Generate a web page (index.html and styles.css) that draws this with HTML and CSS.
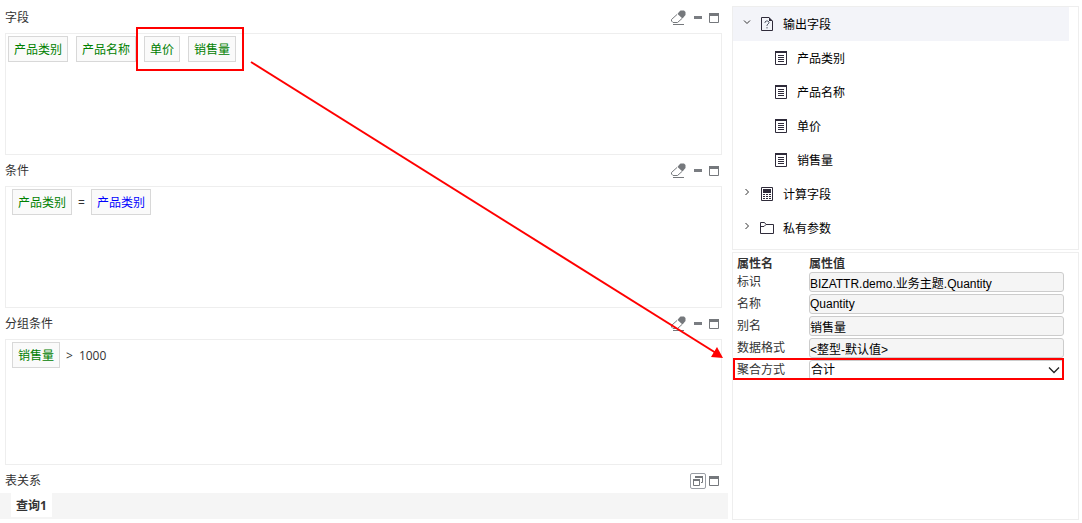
FILE: index.html
```html
<!DOCTYPE html>
<html lang="zh-CN">
<head>
  <meta charset="UTF-8">
  <title>查询设计</title>
  <link rel="stylesheet" href="styles.css">
</head>
<body>

  <!-- 公用图标 -->
  <svg class="sprite" aria-hidden="true">
    <symbol id="i-eraser" viewBox="0 0 16 16">
      <path d="M8 2l1.500-1.500h3.500l1.500 1.500v3l-3 3.500-5-4.500z" fill="#75787c"/>
      <path d="M6 4.500L.5 9.500v1.500l1.500 1.500h4.500l4.500-4M2 14.500h11" fill="none" stroke="#75787c"/>
    </symbol>
    <symbol id="i-min" viewBox="0 0 10 10">
      <path d="M1 3h8v3H1z" fill="#7a7d82"/>
    </symbol>
    <symbol id="i-max" viewBox="0 0 10 10">
      <path d="M.5 .5h9v9h-9z" fill="none" stroke="#75787c"/>
      <path d="M0 0h10v3H0z" fill="#75787c"/>
    </symbol>
    <symbol id="i-restore" viewBox="0 0 10 10">
      <path d="M2 0h8v2H2zM0 3h7v2H0z" fill="#75787c"/>
      <path d="M9.500 1v5.500H8M.5 4v5.500h6V4" fill="none" stroke="#75787c"/>
    </symbol>
    <symbol id="i-field" viewBox="0 0 14 14">
      <path d="M1.500 .5h11v13h-11z" fill="none" stroke="#2f2b3a"/>
      <path d="M1 0h12v2H1z" fill="#2f2b3a"/>
      <path d="M4 4.500h6M4 6.500h6M4 8.500h6M4 10.500h6" stroke="#2f2b3a"/>
    </symbol>
    <symbol id="i-output" viewBox="0 0 14 14">
      <path d="M9 .5H1.500v13h11V4" fill="none" stroke="#2f2b3a"/>
      <path d="M9 0l4 4H9z" fill="#2f2b3a"/>
      <path d="M5 6V5l1-1h2l1 1v1L7 8v1M7 10v1.500" fill="none" stroke="#5d6270"/>
    </symbol>
    <symbol id="i-calc" viewBox="0 0 14 14">
      <path d="M1.500 .5h11v13h-11z" fill="none" stroke="#2f2b3a"/>
      <path d="M3 2h8v4H3zM3 7h2v1H3zM6 7h2v1H6zM9 7h2v1H9zM3 9h2v1H3zM6 9h2v1H6zM9 9h2v1H9zM3 11h2v1H3zM6 11h2v1H6zM9 11h2v1H9z" fill="#2f2b3a"/>
    </symbol>
    <symbol id="i-folder" viewBox="0 0 14 14">
      <path d="M.5 12.500v-11h4l1.500 2h7.500v9zM.5 5.500H4l2-2" fill="none" stroke="#2f2b3a"/>
    </symbol>
    <symbol id="i-open" viewBox="0 0 8 8">
      <path d="M1 2.500l3 3 3-3" fill="none" stroke="#333"/>
    </symbol>
    <symbol id="i-closed" viewBox="0 0 8 8">
      <path d="M2.500 1l3 3-3 3" fill="none" stroke="#333"/>
    </symbol>
  </svg>

  <div class="workspace">
    <div class="main">
      <div class="section">
        <div class="section-header">
          <span class="section-title">字段</span>
          <button class="tool" title="清空"><svg class="eraser"><use href="#i-eraser"/></svg></button>
          <button class="tool" title="最小化"><svg><use href="#i-min"/></svg></button>
          <button class="tool" title="最大化"><svg><use href="#i-max"/></svg></button>
        </div>
        <div class="drop-box">
          <span class="chip">产品类别</span>
          <span class="chip">产品名称</span>
          <span class="marked-group">
            <span class="chip">单价</span>
            <span class="chip">销售量</span>
          </span>
        </div>
      </div>

      <div class="section">
        <div class="section-header">
          <span class="section-title">条件</span>
          <button class="tool" title="清空"><svg class="eraser"><use href="#i-eraser"/></svg></button>
          <button class="tool" title="最小化"><svg><use href="#i-min"/></svg></button>
          <button class="tool" title="最大化"><svg><use href="#i-max"/></svg></button>
        </div>
        <div class="drop-box drop-expr">
          <span class="chip">产品类别</span>
          <span class="expr-text">=</span>
          <span class="chip chip-value">产品类别</span>
        </div>
      </div>

      <div class="section">
        <div class="section-header">
          <span class="section-title">分组条件</span>
          <button class="tool" title="清空"><svg class="eraser"><use href="#i-eraser"/></svg></button>
          <button class="tool" title="最小化"><svg><use href="#i-min"/></svg></button>
          <button class="tool" title="最大化"><svg><use href="#i-max"/></svg></button>
        </div>
        <div class="drop-box drop-expr drop-last">
          <span class="chip">销售量</span>
          <span class="expr-text">&gt;</span>
          <span class="expr-text">1000</span>
        </div>
      </div>

      <div class="section">
        <div class="section-header section-header-last">
          <span class="section-title">表关系</span>
          <button class="tool tool-framed" title="还原"><svg><use href="#i-restore"/></svg></button>
          <button class="tool" title="最大化"><svg><use href="#i-max"/></svg></button>
        </div>
        <div class="tab-bar">
          <button class="tab">查询1</button>
        </div>
      </div>

      <!-- 指向聚合方式的箭头 -->
      <svg class="arrow" viewBox="0 0 474 300">
        <path d="M1 1L466 292" stroke="#f00" stroke-width="2"/>
        <path d="M473 297L461 296L467 286z" fill="#f00"/>
      </svg>
    </div>

    <div class="side">
      <ul class="tree">
        <li class="node selected">
          <svg class="toggle"><use href="#i-open"/></svg>
          <svg class="node-icon"><use href="#i-output"/></svg>
          <span>输出字段</span>
        </li>
        <li class="node leaf"><svg class="node-icon"><use href="#i-field"/></svg><span>产品类别</span></li>
        <li class="node leaf"><svg class="node-icon"><use href="#i-field"/></svg><span>产品名称</span></li>
        <li class="node leaf"><svg class="node-icon"><use href="#i-field"/></svg><span>单价</span></li>
        <li class="node leaf"><svg class="node-icon"><use href="#i-field"/></svg><span>销售量</span></li>
        <li class="node">
          <svg class="toggle"><use href="#i-closed"/></svg>
          <svg class="node-icon"><use href="#i-calc"/></svg>
          <span>计算字段</span>
        </li>
        <li class="node">
          <svg class="toggle"><use href="#i-closed"/></svg>
          <svg class="node-icon"><use href="#i-folder"/></svg>
          <span>私有参数</span>
        </li>
      </ul>

      <div class="props">
        <table class="prop-table">
          <thead>
            <tr><th class="prop-name">属性名</th><th>属性值</th></tr>
          </thead>
          <tbody>
            <tr>
              <td><label for="p-id">标识</label></td>
              <td><input id="p-id" type="text" value="BIZATTR.demo.业务主题.Quantity" readonly></td>
            </tr>
            <tr>
              <td><label for="p-name">名称</label></td>
              <td><input id="p-name" type="text" value="Quantity" readonly></td>
            </tr>
            <tr>
              <td><label for="p-alias">别名</label></td>
              <td><input id="p-alias" type="text" value="销售量" readonly></td>
            </tr>
            <tr>
              <td><label for="p-format">数据格式</label></td>
              <td><input id="p-format" type="text" value="&lt;整型-默认值&gt;" readonly></td>
            </tr>
            <tr>
              <td><label for="p-agg">聚合方式</label></td>
              <td class="select-cell">
                <select id="p-agg"><option>合计</option></select>
                <svg class="caret" viewBox="0 0 12 12"><path d="M1 3.500l5 5 5-5" fill="none" stroke="#222" stroke-width="1.300"/></svg>
              </td>
            </tr>
          </tbody>
        </table>
      </div>
    </div>
  </div>

</body>
</html>
```
FILE: styles.css
```css
* {
  box-sizing: border-box;
}

body {
  margin: 0;
  background-color: #fff;
  color: #333;
  font-family: "Open Sans", "Noto Sans CJK SC", sans-serif;
  font-size: 12px;
  line-height: 18px;
}

button {
  border: 0;
  padding: 0;
  background: none;
  font: inherit;
  color: inherit;
  cursor: pointer;
}

svg {
  display: block;
  flex-shrink: 0;
}

.sprite {
  position: absolute;
  width: 0;
  height: 0;
}

.workspace {
  display: flex;
  gap: 4px;
  padding-right: 3px;
}

/* 左侧设计区 */
.main {
  position: relative;
  flex: 1;
  min-width: 0;
  padding-top: 2px;
}

.section-header {
  display: flex;
  align-items: center;
  height: 31px;
  padding: 0 9px 0 5px;
}

.section-header-last {
  height: 28px;
  padding-top: 3px;
}

.section-title {
  flex: 1;
}

.tool {
  display: flex;
  align-items: center;
  justify-content: center;
  margin-left: 6px;
}

.tool svg {
  width: 10px;
  height: 10px;
}

.tool .eraser {
  width: 16px;
  height: 16px;
}

.tool-framed {
  width: 16px;
  height: 16px;
  margin-right: -3px;
  border: 1px solid #9a9ea5;
  border-radius: 2px;
}

.drop-box {
  display: flex;
  align-items: flex-start;
  gap: 8px;
  min-height: 122px;
  margin: 0 6px 0 5px;
  padding: 2px;
  border: 1px solid #eee;
}

.drop-expr {
  gap: 6px;
  padding-left: 6px;
}

.drop-last {
  min-height: 126px;
}

.chip {
  padding: 2px 5px 0;
  border: 1px solid #d8d8d8;
  background-color: #fafafa;
  color: #008000;
  line-height: 22px;
}

.chip-value {
  color: #00f;
}

.expr-text {
  padding-top: 2px;
  line-height: 24px;
}

.marked-group {
  position: relative;
  display: flex;
  gap: 8px;
}

.marked-group::after {
  content: "";
  position: absolute;
  inset: -9px -8px;
  border: 2px solid #f00;
}

.arrow {
  position: absolute;
  top: 61px;
  left: 250px;
  width: 474px;
  height: 300px;
  pointer-events: none;
}

.tab-bar {
  display: flex;
  padding: 0 11px 2px;
  background-color: #f5f5f5;
}

.tab {
  height: 24px;
  padding: 2px 5px 0;
  background-color: #fff;
  font-weight: bold;
}

/* 右侧树和属性 */
.side {
  display: flex;
  flex-direction: column;
  gap: 2px;
  width: 347px;
  padding-top: 6px;
}

.tree {
  margin: 0;
  padding: 0 9px 4px 0;
  border: 1px solid #eee;
  list-style: none;
  color: #000;
}

.node {
  display: flex;
  align-items: center;
  height: 34px;
  padding-left: 10px;
}

.node span {
  padding-top: 2px;
}

.selected {
  background-color: #f3f4f9;
}

.leaf {
  padding-left: 41px;
}

.toggle {
  width: 8px;
  height: 8px;
  margin: 0 9px 4px 0;
}

.node-icon {
  width: 14px;
  height: 14px;
  margin-right: 9px;
}

.props {
  flex: 1;
  min-height: 268px;
  padding: 3px 12px 0 2px;
  border: 1px solid #eee;
}

.prop-table {
  width: 100%;
  border-spacing: 2px;
  table-layout: fixed;
}

.prop-table th,
.prop-table td {
  height: 20px;
  padding: 0;
  text-align: left;
  line-height: 18px;
}

.prop-table th {
  height: 12px;
  line-height: 12px;
}

.prop-table .prop-name {
  width: 70px;
}

.prop-table label {
  display: block;
}

.prop-table input,
.prop-table select {
  display: block;
  width: 100%;
  height: 20px;
  padding: 0;
  border: 1px solid #ccc;
  border-radius: 3px;
  background-color: #f5f5f5;
  color: #000;
  font-family: "Liberation Sans", "Noto Sans CJK SC", sans-serif;
  font-size: 12px;
}

.prop-table select {
  appearance: none;
  padding-left: 1px;
  background-color: #fff;
}

.select-cell {
  position: relative;
}

/* 红框盖住整行 */
.select-cell::after {
  content: "";
  position: absolute;
  inset: -2px 0 0 -76px;
  border: 2px solid #f00;
  pointer-events: none;
}

.caret {
  position: absolute;
  top: 4px;
  right: 4px;
  width: 12px;
  height: 12px;
  pointer-events: none;
}
```
